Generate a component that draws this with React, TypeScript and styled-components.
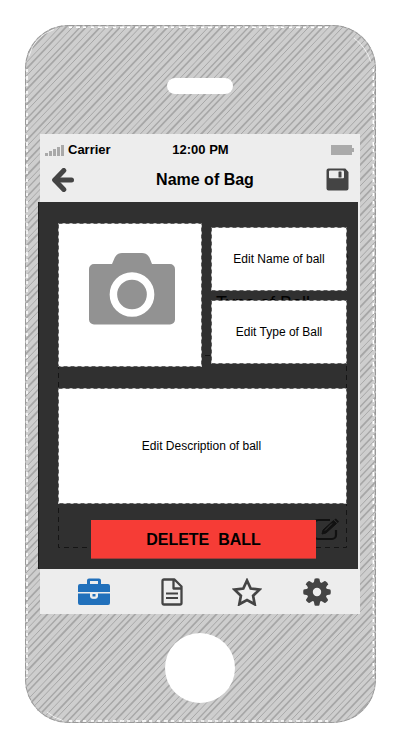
import React from "react";
import styled, { createGlobalStyle } from "styled-components";

const Global = createGlobalStyle`
  * { box-sizing: border-box; }
  body { margin: 0; background: #fff; font-family: "Liberation Sans", Arial, sans-serif; color: #000; }
  svg { display: block; flex: none; }
`;

const Page = styled.main`
  width: 400px;
  height: 748px;
  padding: 25px 24px 0 25px;
`;

const Phone = styled.div`
  position: relative;
  width: 351px;
  height: 698px;
  padding-left: 13px;
  display: flex;
  flex-direction: column;
  border-radius: 43px;
  overflow: hidden;
  background: #cecece;
  > * { position: relative; flex: none; }
`;

const Casing = styled.svg`
  && {
    position: absolute;
    left: 0;
    top: 0;
  }
`;

const Speaker = styled.div`
  width: 66px;
  height: 16px;
  margin: 53px 0 40px 129px;
  border-radius: 8px;
  background: #fff;
`;

const Bar = styled.div`
  width: 320px;
  margin-left: 2px;
  background: #ededed;
`;

const Header = styled(Bar)`
  height: 68px;
`;

const StatusRow = styled.div`
  display: grid;
  grid-template-columns: 100px 1fr 99px;
  align-items: center;
  height: 31px;
  padding: 0 6px 0 6px;
  font-size: 13px;
  font-weight: 700;
  text-align: center;
  > :last-child { justify-self: end; }
`;

const Carrier = styled.div`
  display: flex;
  align-items: center;
  gap: 4px;
  margin-left: -1px;
`;

const TitleRow = styled.div`
  display: grid;
  grid-template-columns: 40px 1fr 40px;
  align-items: center;
  height: 30px;
  padding: 0 11px;
  > :last-child { justify-self: end; margin-bottom: 2px; }
`;

const Title = styled.h1`
  margin: 0;
  padding-left: 10px;
  font-size: 16px;
  line-height: 30px;
  text-align: center;
`;

const Panel = styled.section`
  position: relative;
  width: 322px;
  height: 367px;
  padding: 21px 13px 0 20px;
  background: linear-gradient(90deg, #1c1c1c 0 1px, #303030 1px 320px, #ededed 320px);
`;

const Entries = styled.div`
  position: relative;
  display: grid;
  grid-template-columns: 144px 136px;
  column-gap: 9px;
`;

const Stack = styled.div`
  display: grid;
  gap: 9px;
  padding-top: 4px;
  align-content: start;
`;

const Box = styled.div<{ $w: number; $h: number }>`
  position: relative;
  display: flex;
  align-items: center;
  justify-content: center;
  width: ${(p) => p.$w}px;
  height: ${(p) => p.$h}px;
  background: #fff;
  font-size: 12px;
`;

const Photo = styled(Box)`
  padding: 0 0 12px 3px;
`;

const Description = styled(Box)`
  margin-top: 21px;
  padding-right: 2px;
`;

const DeleteButton = styled.button`
  position: relative;
  display: block;
  width: 225px;
  height: 39px;
  margin: 16px 0 0 33px;
  padding: 2px 0 0;
  border: 0;
  border-bottom: 1px solid #a43a38;
  background: #f63c36;
  color: #000;
  font: 700 16px "Liberation Sans", Arial, sans-serif;
  white-space: pre;
`;

const BoxOutline = styled.svg`
  position: absolute;
  left: 0;
  top: 0;
`;

const CoveredLabel = styled.span`
  position: absolute;
  left: 178px;
  top: 91px;
  font-size: 18px;
  line-height: 20px;
  white-space: nowrap;
`;

const CoveredEdit = styled.svg`
  position: absolute;
  left: 274px;
  top: 316px;
`;

const TabBar = styled(Bar)`
  display: grid;
  grid-template-columns: 107px 50px 99px 41px;
  align-items: center;
  justify-items: center;
  height: 45px;
`;

const HomeButton = styled.div`
  width: 70px;
  height: 70px;
  margin: 19px 0 0 127px;
  border-radius: 50%;
  background: #fff;
`;

const Dashes = ({ w, h }: { w: number; h: number }) => (
  <BoxOutline width={w} height={h}>
    <rect x=".5" y=".5" width={w - 1} height={h - 1} fill="none" stroke="#c4c4c4" />
    <rect x=".5" y=".5" width={w - 1} height={h - 1} fill="none" stroke="#5c5c5c" strokeDasharray="4 3" />
  </BoxOutline>
);

const gearTeeth = [0, 45, 90, 135, 180, 225, 270, 315];

const hatch = Array.from({ length: 152 }, (_, i) => ({
  x: -668 + i * 6.75 + Math.sin(i * 2.3) * 0.5,
  width: [1.7, 0.9, 1.8, 1, 1.3][i % 5],
}));

export default function App() {
  return (
    <Page>
      <Global />
      <Phone>
        <Casing width="351" height="698" fill="none">
          {hatch.map((line) => (
            <path key={line.x} d={`M${line.x} 698L${line.x + 664} 0`} stroke="#a6a6a6" strokeWidth={line.width} />
          ))}
          <path d="M44 2.200H307M348.300 44V653M44 696H307M2 44V653" stroke="#fff" strokeWidth="1.500" strokeDasharray="3 4 4 3 3 5" />
          <path d="M4 31Q9 11 29 4.500M329 13Q341 22 346 37M22 687Q29 693 38 695.500" stroke="#fff" strokeWidth=".7" />
          <rect x=".5" y=".5" width="350" height="697" rx="43" stroke="#bbb" />
          <rect x=".5" y=".5" width="350" height="697" rx="43" stroke="#999" strokeDasharray="6 2" />
        </Casing>
        <Speaker />
        <Header>
          <StatusRow>
            <Carrier>
              <svg width="19" height="12" fill="#a9a9a9">
                <path d="M0 9h3v3H0zM4 7h3v5H4zM8 5h3v7H8zM12 3h3v9h-3zM16 1h3v11h-3z" />
              </svg>
              Carrier
            </Carrier>
            <span>12:00 PM</span>
            <svg width="23" height="10" fill="#aaa"><path d="M0 0h21v3h2v4h-2v3H0z" /></svg>
          </StatusRow>
          <TitleRow>
            <svg width="24" height="24" fill="none" stroke="#444" strokeWidth="5">
              <path d="M12.800 2.500 3.700 12l9.100 9.500" strokeLinejoin="round" strokeLinecap="round" transform="translate(0 0)" />
              <path d="M4 12h16.500" strokeLinecap="round" />
            </svg>
            <Title>Name of Bag</Title>
            <svg width="23" height="23">
              <path d="M2.500.5h16.800l3.200 3.400v16.600a2 2 0 0 1-2 2h-18a2 2 0 0 1-2-2v-18a2 2 0 0 1 2-2z" fill="#444" />
              <path d="M4 2.500h12.800q1.200 0 1.200 1.200v5.600q0 1-1 1H4q-1 0-1-1V3.500q0-1 1-1z" fill="#ededed" />
              <rect x="12.500" y="3.500" width="3" height="6" rx=".5" fill="#444" />
            </svg>
          </TitleRow>
        </Header>
        <Panel>
          <BoxOutline width="322" height="367" fill="none" stroke="#151515" strokeDasharray="5 4">
            <path d="M20.500 153V345.500H308.500V153M167 153.500h5" />
            <path d="m308 51 2 4-2 3" strokeDasharray="none" />
          </BoxOutline>
          <CoveredLabel>Type of Ball</CoveredLabel>
          <CoveredEdit width="29" height="24" fill="none" stroke="#111" strokeWidth="2.200">
            <path d="M18 2H6a4 4 0 0 0-4 4v11a4 4 0 0 0 4 4h14a4 4 0 0 0 4-4v-5" />
            <path d="m10 16 1-4L21.500 2.500l3 3L14 15z" fill="#111" strokeWidth="1" />
            <path d="m22.400 1.600 1.400-1.200 3.200 3-1.400 1.500z" fill="#111" stroke="none" />
            <path d="m13 12.500 7-7" stroke="#444" strokeWidth=".8" />
          </CoveredEdit>
          <Entries>
            <Photo $w={144} $h={144}>
              <Dashes w={144} h={144} />
              <svg width="86" height="72">
                <path d="M5 11h18l2.800-6.500Q28 0 33 0h20q5 0 7.400 4.500L63 11h18a5 5 0 0 1 5 5v50.500a5 5 0 0 1-5 5H5a5 5 0 0 1-5-5V16a5 5 0 0 1 5-5z" fill="#929292" />
                <circle cx="43" cy="41.500" r="18.600" fill="none" stroke="#fff" strokeWidth="7.500" />
              </svg>
            </Photo>
            <Stack>
              <Box $w={136} $h={64}><Dashes w={136} h={64} />Edit Name of ball</Box>
              <Box $w={136} $h={64}><Dashes w={136} h={64} />Edit Type of Ball</Box>
            </Stack>
          </Entries>
          <Description $w={289} $h={116}><Dashes w={289} h={116} />Edit Description of ball</Description>
          <DeleteButton>{"DELETE  BALL"}</DeleteButton>
        </Panel>
        <TabBar>
          <svg width="32" height="28" fill="#2170bb">
            <path fillRule="evenodd" d="M11 .5h10q2 0 2 2V6h7q2 0 2 2v6H0V8q0-2 2-2h7V2.500q0-2 2-2zm1 2.500v3h8V3z" />
            <path d="M0 15.500h12v2q0 3 4 3t4-3v-2h12V25q0 2-2 2H2q-2 0-2-2z" />
            <path d="M13 15.500v3q0 1.500 1.500 1.500h3q1.500 0 1.500-1.500v-3" fill="none" stroke="#ededed" strokeWidth="1.500" />
            <path d="M14.500 16h3v2.500h-3z" />
          </svg>
          <svg width="22" height="28" viewBox="0 0 22 28" fill="none" stroke="#444" strokeWidth="2.300" strokeLinejoin="round">
            <path d="M3 1.500h10.500l7 7V25q0 1.500-1.500 1.500H3Q1.500 26.500 1.500 25V3Q1.500 1.500 3 1.500zM12.500 1.500V10.500h8" />
            <path d="M5 15.500h12M5 20h12" strokeWidth="1.800" />
          </svg>
          <svg width="30" height="28" fill="none" stroke="#444" strokeWidth="2.700">
            <path d="m15 2.500 3.700 8 8.800 1.100-6.400 6.200 1.600 8.500-7.700-4.200-7.700 4.200 1.600-8.500-6.400-6.200 8.800-1.100z" />
          </svg>
          <svg width="28" height="28" fill="#444">
            {gearTeeth.map((a) => (
              <path key={a} d="M10.500 6 11.600.8Q12 .2 14 .2t2.400.6L17.500 6z" transform={`rotate(${a} 14 14)`} />
            ))}
            <circle cx="14" cy="14" r="7.200" fill="none" stroke="#444" strokeWidth="6" />
          </svg>
        </TabBar>
        <HomeButton />
      </Phone>
    </Page>
  );
}
